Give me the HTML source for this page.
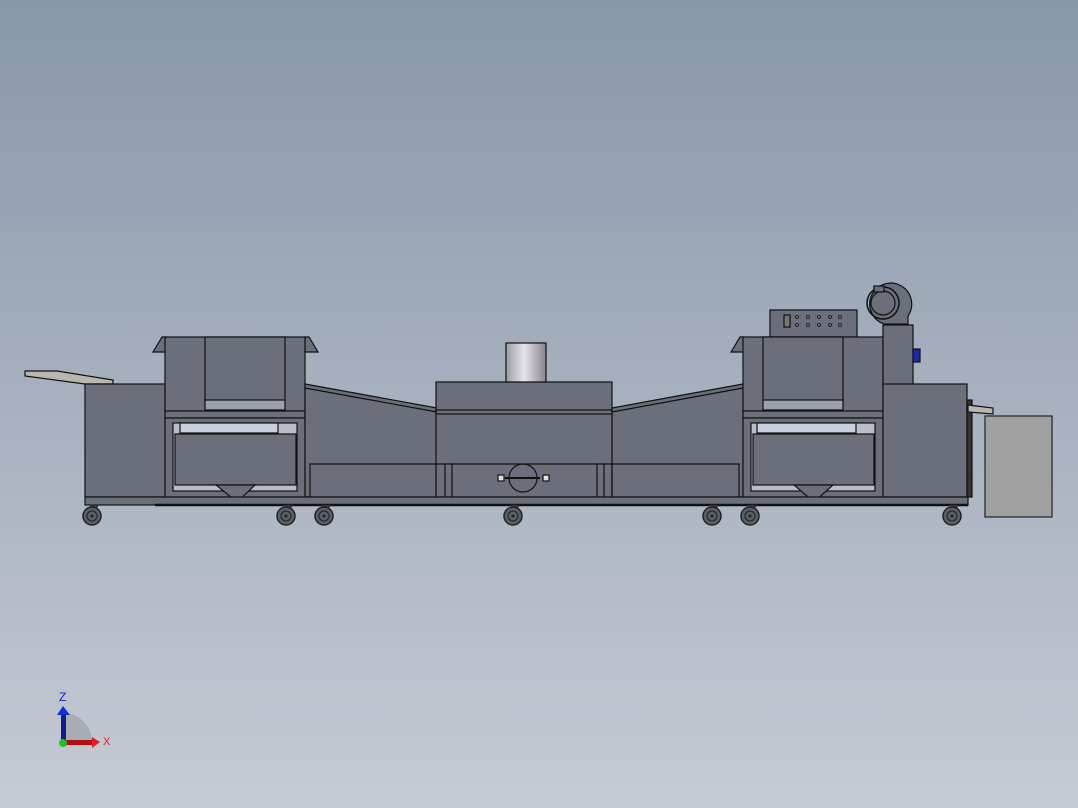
<!DOCTYPE html>
<html><head><style>
html,body{margin:0;padding:0;}
body{width:1078px;height:808px;overflow:hidden;background:linear-gradient(#8897aa,#c6cad4);}
svg{display:block;}
</style></head><body>
<svg width="1078" height="808" viewBox="0 0 1078 808" xmlns="http://www.w3.org/2000/svg">
<defs>
<linearGradient id="ch" x1="0" x2="1"><stop offset="0" stop-color="#9c9ca6"/><stop offset="0.45" stop-color="#e4e4ea"/><stop offset="1" stop-color="#8c8290"/></linearGradient>
<g id="caster"><path d="M-3,-11 L6,-11 L3,-4" fill="#444" stroke="#222"/><circle r="9" fill="#5a5e68" stroke="#222" stroke-width="1.5"/><circle r="5" fill="none" stroke="#222"/><circle r="1.5" fill="#222"/></g>
</defs>
<g stroke="#111" stroke-width="1.2" fill="#6b6f7b">
<polygon points="25,371 57,371 113,380 113,384 85,384 25,376" fill="#b9b6ad"/>
<rect x="85" y="384" width="80" height="113"/>
<polygon points="153,352 162,337 166,337 166,352"/>
<polygon points="305,337 309,337 318,352 305,352"/>
<rect x="165" y="337" width="140" height="74"/>
<rect x="205" y="337" width="80" height="73"/>
<rect x="205" y="400" width="80" height="10" fill="#9aa0ad"/>
<rect x="165" y="411" width="140" height="7"/>
<rect x="165" y="418" width="140" height="79"/>
<rect x="173" y="423" width="124" height="68" fill="#b8bdc8"/>
<rect x="180" y="423" width="98" height="10" fill="#c8cfe0"/>
<rect x="175" y="434" width="121" height="51"/>
<polygon points="216,485 255,485 237,502"/>
<polygon points="305,384 437,408 437,497 305,497"/>
<polyline points="305,388 437,412" fill="none"/>
<rect x="310" y="464" width="127" height="33"/>
<rect x="436" y="382" width="176" height="115"/>
<rect x="436" y="410" width="176" height="4"/>
<rect x="436" y="464" width="176" height="33"/>
<rect x="445" y="464" width="7" height="33"/>
<rect x="597" y="464" width="7" height="33"/>
<circle cx="523" cy="478" r="14" fill="none"/>
<line x1="505" y1="478" x2="540" y2="478" stroke-width="2"/>
<rect x="498" y="475" width="6" height="6" fill="#ddd"/>
<rect x="543" y="475" width="6" height="6" fill="#ddd"/>
<rect x="506" y="343" width="40" height="39" fill="url(#ch)"/>
<polygon points="612,408 743,384 743,497 612,497"/>
<polyline points="612,412 743,388" fill="none"/>
<rect x="612" y="464" width="127" height="33"/>
<rect x="770" y="310" width="87" height="27"/>
<rect x="784" y="315" width="6" height="12" fill="#777"/>
<g fill="none" stroke-width="0.8"><circle cx="797" cy="317" r="1.5"/><circle cx="808" cy="317" r="1.5"/><circle cx="819" cy="317" r="1.5"/><circle cx="830" cy="317" r="1.5"/><circle cx="840" cy="317" r="1.5"/><circle cx="797" cy="325" r="1.5"/><circle cx="808" cy="325" r="1.5"/><circle cx="819" cy="325" r="1.5"/><circle cx="830" cy="325" r="1.5"/><circle cx="840" cy="325" r="1.5"/></g>
<polygon points="731,352 740,337 744,337 744,352"/>
<rect x="743" y="337" width="140" height="74"/>
<rect x="763" y="337" width="80" height="73"/>
<rect x="763" y="400" width="80" height="10" fill="#9aa0ad"/>
<rect x="743" y="411" width="140" height="7"/>
<rect x="743" y="418" width="140" height="79"/>
<rect x="751" y="423" width="124" height="68" fill="#b8bdc8"/>
<rect x="757" y="423" width="99" height="10" fill="#c8cfe0"/>
<rect x="753" y="434" width="121" height="51"/>
<polygon points="794,485 833,485 814,502"/>
<!-- fan -->
<path d="M884,324 A21,21 0 1 1 908,316 L908,324 Z"/>
<circle cx="883" cy="303" r="16" fill="none" stroke-width="1.5"/>
<circle cx="883" cy="303" r="12"/>
<rect x="874" y="286" width="10" height="6"/>
<rect x="883" y="325" width="30" height="60"/>
<rect x="913" y="349" width="7" height="13" fill="#1a2aa8"/>
<rect x="883" y="384" width="84" height="113"/>
<rect x="967" y="400" width="5" height="97" fill="#333"/>
<polygon points="968,405 993,408 993,414 968,412" fill="#b9b6ad"/>
<rect x="85" y="497" width="883" height="8"/>
<line x1="155" y1="505" x2="968" y2="505" stroke-width="2.5"/>
<rect x="985" y="416" width="67" height="101" fill="#a0a0a0" stroke="#222"/>
</g>
<use href="#caster" x="92" y="516"/>
<use href="#caster" x="286" y="516"/>
<use href="#caster" x="324" y="516"/>
<use href="#caster" x="513" y="516"/>
<use href="#caster" x="712" y="516"/>
<use href="#caster" x="750" y="516"/>
<use href="#caster" x="952" y="516"/>
<path d="M63,742 L63,713 A29,29 0 0 1 92,742 Z" fill="#a8acb4"/>
<rect x="61" y="713" width="5" height="30" fill="#101a90"/>
<polygon points="57,715 63,706 70,715" fill="#1030d0"/>
<rect x="63" y="740" width="30" height="5" fill="#b01010"/>
<polygon points="92,737 100,742 92,748" fill="#e02020"/>
<circle cx="63" cy="743" r="4" fill="#20c020"/>
<text x="59" y="701" font-family="Liberation Sans,sans-serif" font-size="12" fill="#1020d0">Z</text>
<text x="103" y="745" font-family="Liberation Sans,sans-serif" font-size="11" fill="#e02020">X</text>
</svg>
</body></html>
